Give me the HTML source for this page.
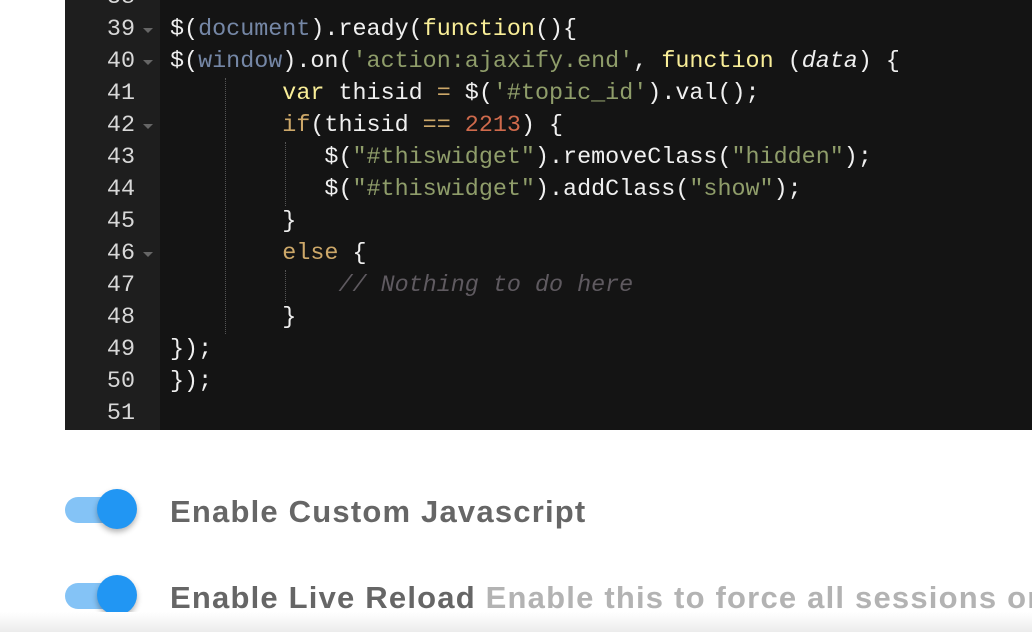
<!DOCTYPE html>
<html><head><style>
body{margin:0;width:1032px;height:632px;background:#fff;overflow:hidden;position:relative;font-family:"Liberation Sans",sans-serif}
#ed{position:absolute;left:65px;top:0;width:967px;height:430px;background:#141414;overflow:hidden}
#gut{position:absolute;left:0;top:0;width:95px;height:430px;background:#1e1e1e}
.ln{position:absolute;left:0;width:70px;text-align:right;color:#d8d8d8;font:23.4px/32px "Liberation Mono",monospace}
.ar{position:absolute;left:78px;width:0;height:0;border-left:5px solid transparent;border-right:5px solid transparent;border-top:5px solid #666}
.cl{position:absolute;left:105px;white-space:pre;color:#f0f0f0;font:23.4px/32px "Liberation Mono",monospace}
.g{position:absolute;border-left:1px dotted #555;width:0}
.b{color:#7587a6}.s{color:#8f9d6a}.y{color:#f9ee98}.k{color:#cda869}.n{color:#cf6a4c}.c{color:#5f5a60;font-style:italic}.i{font-style:italic}
.tr{position:absolute;left:65px;width:62px;height:26px;border-radius:13px;background:#84c3f6}
.kn{position:absolute;left:97px;width:40px;height:40px;border-radius:50%;background:#2196f3;box-shadow:0 3px 6px rgba(0,0,0,.3)}
.lab{position:absolute;left:170px;width:862px;overflow:hidden;font-weight:bold;font-size:31px;letter-spacing:1.2px;color:#666;white-space:nowrap}
.lab span{color:#b3b3b3}
#sh{position:absolute;left:0;top:612px;width:1032px;height:20px;background:linear-gradient(#fff,#ececec)}
</style></head><body>
<div id="ed">
<div id="gut"></div>
<div class="g" style="left:160px;top:78px;height:256px"></div>
<div class="g" style="left:220px;top:142px;height:64px"></div>
<div class="g" style="left:220px;top:270px;height:32px"></div>
<div class="ln" style="top:-18px">38</div>
<div class="ln" style="top:14px">39</div><div class="ar" style="top:28px"></div>
<div class="ln" style="top:46px">40</div><div class="ar" style="top:60px"></div>
<div class="ln" style="top:78px">41</div>
<div class="ln" style="top:110px">42</div><div class="ar" style="top:124px"></div>
<div class="ln" style="top:142px">43</div>
<div class="ln" style="top:174px">44</div>
<div class="ln" style="top:206px">45</div>
<div class="ln" style="top:238px">46</div><div class="ar" style="top:252px"></div>
<div class="ln" style="top:270px">47</div>
<div class="ln" style="top:302px">48</div>
<div class="ln" style="top:334px">49</div>
<div class="ln" style="top:366px">50</div>
<div class="ln" style="top:398px">51</div>
<div class="cl" style="top:14px">$(<span class="b">document</span>).ready(<span class="y">function</span>(){</div>
<div class="cl" style="top:46px">$(<span class="b">window</span>).on(<span class="s">'action:ajaxify.end'</span>, <span class="y">function</span> (<span class="i">data</span>) {</div>
<div class="cl" style="top:78px">        <span class="y">var</span> thisid <span class="k">=</span> $(<span class="s">'#topic_id'</span>).val();</div>
<div class="cl" style="top:110px">        <span class="k">if</span>(thisid <span class="k">==</span> <span class="n">2213</span>) {</div>
<div class="cl" style="top:142px">           $(<span class="s">"#thiswidget"</span>).removeClass(<span class="s">"hidden"</span>);</div>
<div class="cl" style="top:174px">           $(<span class="s">"#thiswidget"</span>).addClass(<span class="s">"show"</span>);</div>
<div class="cl" style="top:206px">        }</div>
<div class="cl" style="top:238px">        <span class="k">else</span> {</div>
<div class="cl" style="top:270px">            <span class="c">// Nothing to do here</span></div>
<div class="cl" style="top:302px">        }</div>
<div class="cl" style="top:334px">});</div>
<div class="cl" style="top:366px">});</div>
</div>
<div class="tr" style="top:497px"></div><div class="kn" style="top:489px"></div>
<div class="lab" style="top:494px">Enable Custom Javascript</div>
<div class="tr" style="top:583px"></div><div class="kn" style="top:575px"></div>
<div class="lab" style="top:580px">Enable Live Reload <span>Enable this to force all sessions on ev</span></div>
<div id="sh"></div>
</body></html>
